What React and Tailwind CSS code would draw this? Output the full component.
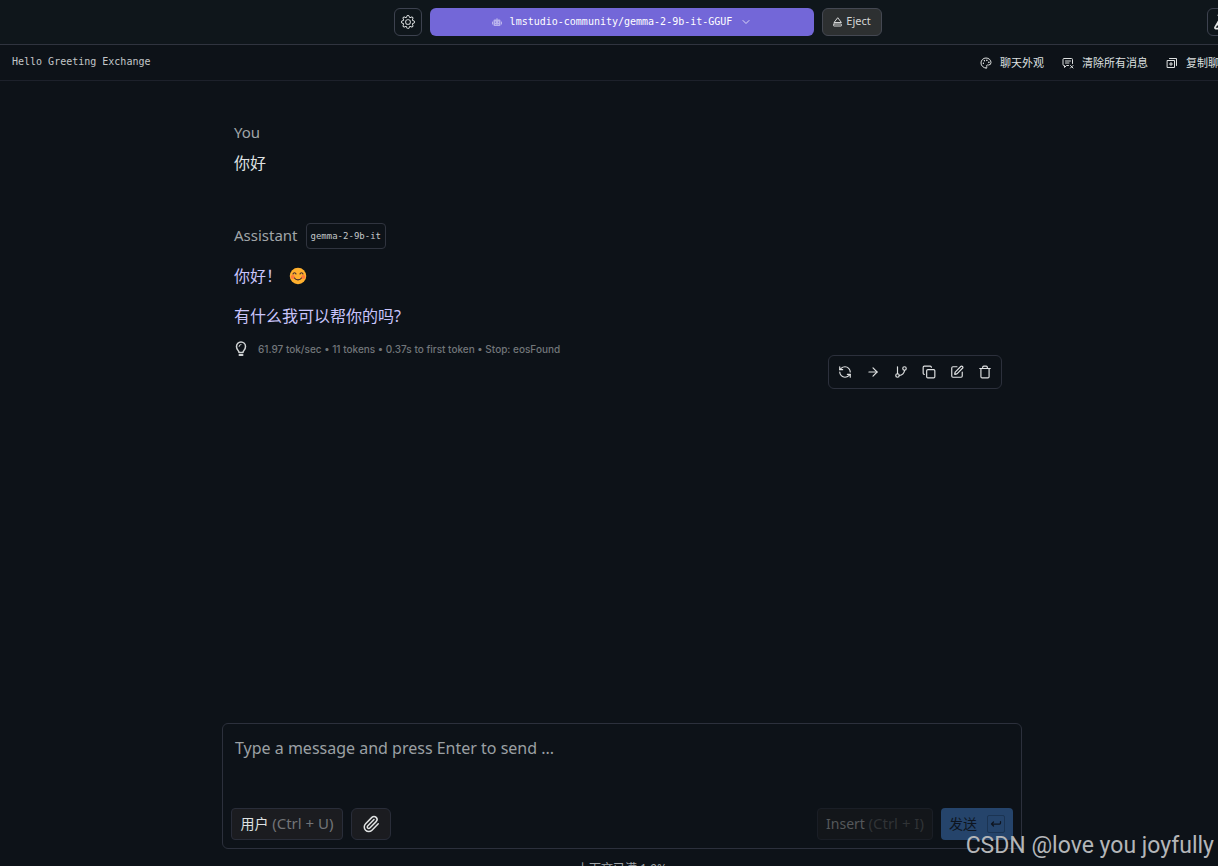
import React, { useState } from 'react'
import { ArrowRight, ChevronDown, Copy, GitBranch, Palette, Paperclip, RefreshCcw, SquarePen, Trash } from 'lucide-react'
import { BsGear } from 'react-icons/bs'
import { FaRobot } from 'react-icons/fa'

const ICON = { fill: 'none', stroke: 'currentColor', strokeLinecap: 'round', strokeLinejoin: 'round' }

function EjectIcon() {
  return (
    <svg width="9" height="10" viewBox="0 0 18 20" strokeWidth="2" {...ICON}>
      <path d="M9 2 2 11h14z" />
      <rect x="1" y="14" width="16" height="4" rx="1" />
    </svg>
  )
}

function ClearIcon() {
  return (
    <svg width="12" height="12" viewBox="0 0 24 24" strokeWidth="2" {...ICON}>
      <path d="M13 17H9l-4 4v-4H4a2 2 0 0 1-2-2V5a2 2 0 0 1 2-2h15a2 2 0 0 1 2 2v8" />
      <path d="M7 8h10M7 12h7M17 17l5 5M22 17l-5 5" />
    </svg>
  )
}

function DuplicateIcon() {
  return (
    <svg width="12" height="12" viewBox="0 0 24 24" strokeWidth="2" {...ICON}>
      <path d="M3 7h14v14H3zM7 3h14v14M10 11v6M7 14h6" />
    </svg>
  )
}

function BulbIcon() {
  return (
    <svg width="14" height="16" viewBox="0 0 28 32" strokeWidth="3" className="text-[#d0d3d4]" {...ICON}>
      <path d="M10 23c0-4-5-5-5-12a9 9 0 0 1 18 0c0 7-5 8-5 12z" />
      <path d="M10 11a4 4 0 0 1 4-4" strokeWidth="2" />
      <path d="M11 28h6" strokeWidth="4" />
    </svg>
  )
}

function EnterIcon() {
  return (
    <svg width="12" height="12" viewBox="0 0 24 24" strokeWidth="2.5" {...ICON}>
      <path d="M21 7v3a2 2 0 0 1-2 2H3M7 8l-4 4 4 4" />
    </svg>
  )
}

function FlaskIcon() {
  return (
    <svg width="16" height="16" viewBox="0 0 24 24" strokeWidth="2.5" {...ICON}>
      <path d="M8 2h8M10 2v6L3 20a1.5 1.5 0 0 0 1.3 2h15.4a1.5 1.5 0 0 0 1.3-2L14 8V2M6 16h12" />
    </svg>
  )
}

function SmileEmoji() {
  return (
    <svg width="18" height="18" viewBox="0 0 36 36" role="img" aria-label="smile">
      <circle cx="18" cy="18" r="16.5" fill="#ffb02e" />
      <circle cx="7.5" cy="20" r="4" fill="#ff7a3d" />
      <circle cx="28.5" cy="20" r="4" fill="#ff7a3d" />
      <g fill="none" stroke="#402a32" strokeWidth="2.2" strokeLinecap="round">
        <path d="M8 14c1-3.5 5-3.5 6 0M22 14c1-3.5 5-3.5 6 0M11 22c3 5 11 5 14 0" />
      </g>
    </svg>
  )
}

const chatActions = [
  { label: '聊天外观', icon: <Palette size={12} /> },
  { label: '清除所有消息', icon: <ClearIcon /> },
  { label: '复制聊天', icon: <DuplicateIcon /> },
]

const messageActions = [
  { label: 'Regenerate', Icon: RefreshCcw },
  { label: 'Continue', Icon: ArrowRight },
  { label: 'Branch', Icon: GitBranch },
  { label: 'Copy', Icon: Copy },
  { label: 'Edit', Icon: SquarePen },
  { label: 'Delete', Icon: Trash },
]

function TopBar() {
  return (
    <header className="grid h-[45px] shrink-0 grid-cols-[1fr_auto_1fr] items-center gap-2 border-b border-[#30343f] bg-[#0f161b] pr-[9px] pl-[9px]">
      <button aria-label="Settings" className="flex size-7 items-center justify-center justify-self-end rounded-md border border-[#3d424f] text-[#dfe2e2]">
        <BsGear size={14} />
      </button>
      <button className="flex h-7 w-96 items-center justify-center rounded-md bg-[#7367d8] pb-0.5 font-['DejaVu_Sans_Mono','Liberation_Mono',monospace] text-[10px] text-white">
        <FaRobot size={10} className="mt-0.5 mr-2 text-[#b9b2ec]" />
        lmstudio-community/gemma-2-9b-it-GGUF
        <ChevronDown size={12} className="mt-0.5 ml-2 text-[#dcd9f6]" />
      </button>
      <div className="flex items-center justify-between">
        <button className="flex h-7 w-[60px] items-center justify-center gap-1 rounded-md border border-[#444852] bg-[#2d3031] pb-px text-[11px] text-[#d3d5d5]">
          <EjectIcon />
          Eject
        </button>
        <button aria-label="Playground" className="flex size-7 items-center justify-center rounded-md border border-[#3d424f] text-[#e4e6e6]">
          <FlaskIcon />
        </button>
      </div>
    </header>
  )
}

function ChatBar() {
  return (
    <div className="flex h-9 shrink-0 items-center justify-between border-b border-[#1d212b] pl-3">
      <h1 className="pb-0.5 font-['DejaVu_Sans_Mono','Liberation_Mono',monospace] text-[10px] text-[#c3c7c9]">Hello Greeting Exchange</h1>
      <div className="flex gap-[18px] pt-px pr-[14px] text-[11px] text-[#dde0e0]">
        {chatActions.map(({ label, icon }) => (
          <button key={label} className="flex items-center gap-2">
            {icon}
            {label}
          </button>
        ))}
      </div>
    </div>
  )
}

function Messages() {
  return (
    <main className="mx-auto w-full max-w-[800px] grow px-3 pt-[39px] text-base">
      <section>
        <h2 className="text-[15px] leading-6 text-[#a0a5a8]">You</h2>
        <p className="mt-[7px] leading-6 text-[#dfe1e2]">你好</p>
      </section>
      <section className="mt-12">
        <div className="flex items-center gap-2">
          <h2 className="pb-0.5 text-[15px] leading-6 text-[#a0a5a8]">Assistant</h2>
          <span className="rounded border border-[#30343f] px-1 font-['DejaVu_Sans_Mono','Liberation_Mono',monospace] text-[9px] leading-6 text-[#c3c7c9]">
            gemma-2-9b-it
          </span>
        </div>
        <p className="mt-[15px] flex items-center leading-6 text-[#c9c4fb]">
          你好！
          <span className="ml-[7px]"><SmileEmoji /></span>
        </p>
        <p className="mt-4 leading-6 text-[#c9c4fb]">有什么我可以帮你的吗?</p>
        <div className="mt-[13px] flex items-center gap-[10px] font-['Inter',sans-serif] text-[10px] leading-4 font-medium text-[#72767a]">
          <BulbIcon />
          61.97 tok/sec • 11 tokens • 0.37s to first token • Stop: eosFound
        </div>
      </section>
      <div className="-mt-0.5 mr-2 flex justify-end">
        <div className="flex h-[34px] items-center rounded-md border border-[#2c303c] px-[2px] text-[#dfe1e2]">
          {messageActions.map(({ label, Icon }) => (
            <button key={label} aria-label={label} className="flex size-7 items-center justify-center">
              <Icon size={14} />
            </button>
          ))}
        </div>
      </div>
    </main>
  )
}

function Composer() {
  const [draft, setDraft] = useState('')

  return (
    <footer className="mx-auto w-full max-w-[800px] shrink-0">
      <div className="rounded-md border border-[#2c303c] p-2">
        <textarea
          aria-label="Message"
          rows={2}
          value={draft}
          onChange={(e) => setDraft(e.target.value)}
          placeholder="Type a message and press Enter to send ..."
          className="block h-[76px] w-full resize-none bg-transparent px-1 py-1 text-base text-[#dfe1e2] outline-none placeholder:text-[#9ba0a4]"
        />
        <div className="flex items-center gap-2 text-sm">
          <button className="h-8 w-28 rounded border border-[#292d39] bg-[#1b1c20] whitespace-nowrap text-[#dfe1e2]">
            用户 <span className="text-[15px] text-[#727477]">(Ctrl + U)</span>
          </button>
          <button aria-label="Attach file" className="flex h-8 w-10 items-center justify-center rounded-md border border-[#292d39] bg-[#1b1c20] text-[#e0e2e2]">
            <Paperclip size={18} />
          </button>
          <button disabled className="ml-auto h-8 w-[116px] rounded border border-[#1a1e26] bg-[#13161a] whitespace-nowrap text-[#55585b]">
            Insert <span className="text-[15px] text-[#303336]">(Ctrl + I)</span>
          </button>
          <button disabled className="flex h-8 w-[72px] items-center justify-between rounded bg-[#25446b] px-2 text-[#0e1520]">
            发送
            <span className="flex size-[18px] items-center justify-center rounded-xs border border-[#1b3453]">
              <EnterIcon />
            </span>
          </button>
        </div>
      </div>
      <p className="mt-3 text-center text-xs leading-4 text-[#a0a5a8]">上下文已满 1.9%</p>
    </footer>
  )
}

export default function App() {
  return (
    <div className="relative h-screen overflow-hidden bg-[#0d1218] font-['Noto_Sans','Noto_Sans_CJK_SC',sans-serif]">
      {/* the window runs a little past the right and bottom edges */}
      <div className="flex h-[calc(100%+11px)] w-[calc(100%+26px)] flex-col">
        <TopBar />
        <ChatBar />
        <Messages />
        <Composer />
      </div>
      <span className="absolute right-1 bottom-1 font-['Roboto',sans-serif] text-[23px] leading-8 text-[#b4b6b8]">
        CSDN @love you joyfully
      </span>
    </div>
  )
}
